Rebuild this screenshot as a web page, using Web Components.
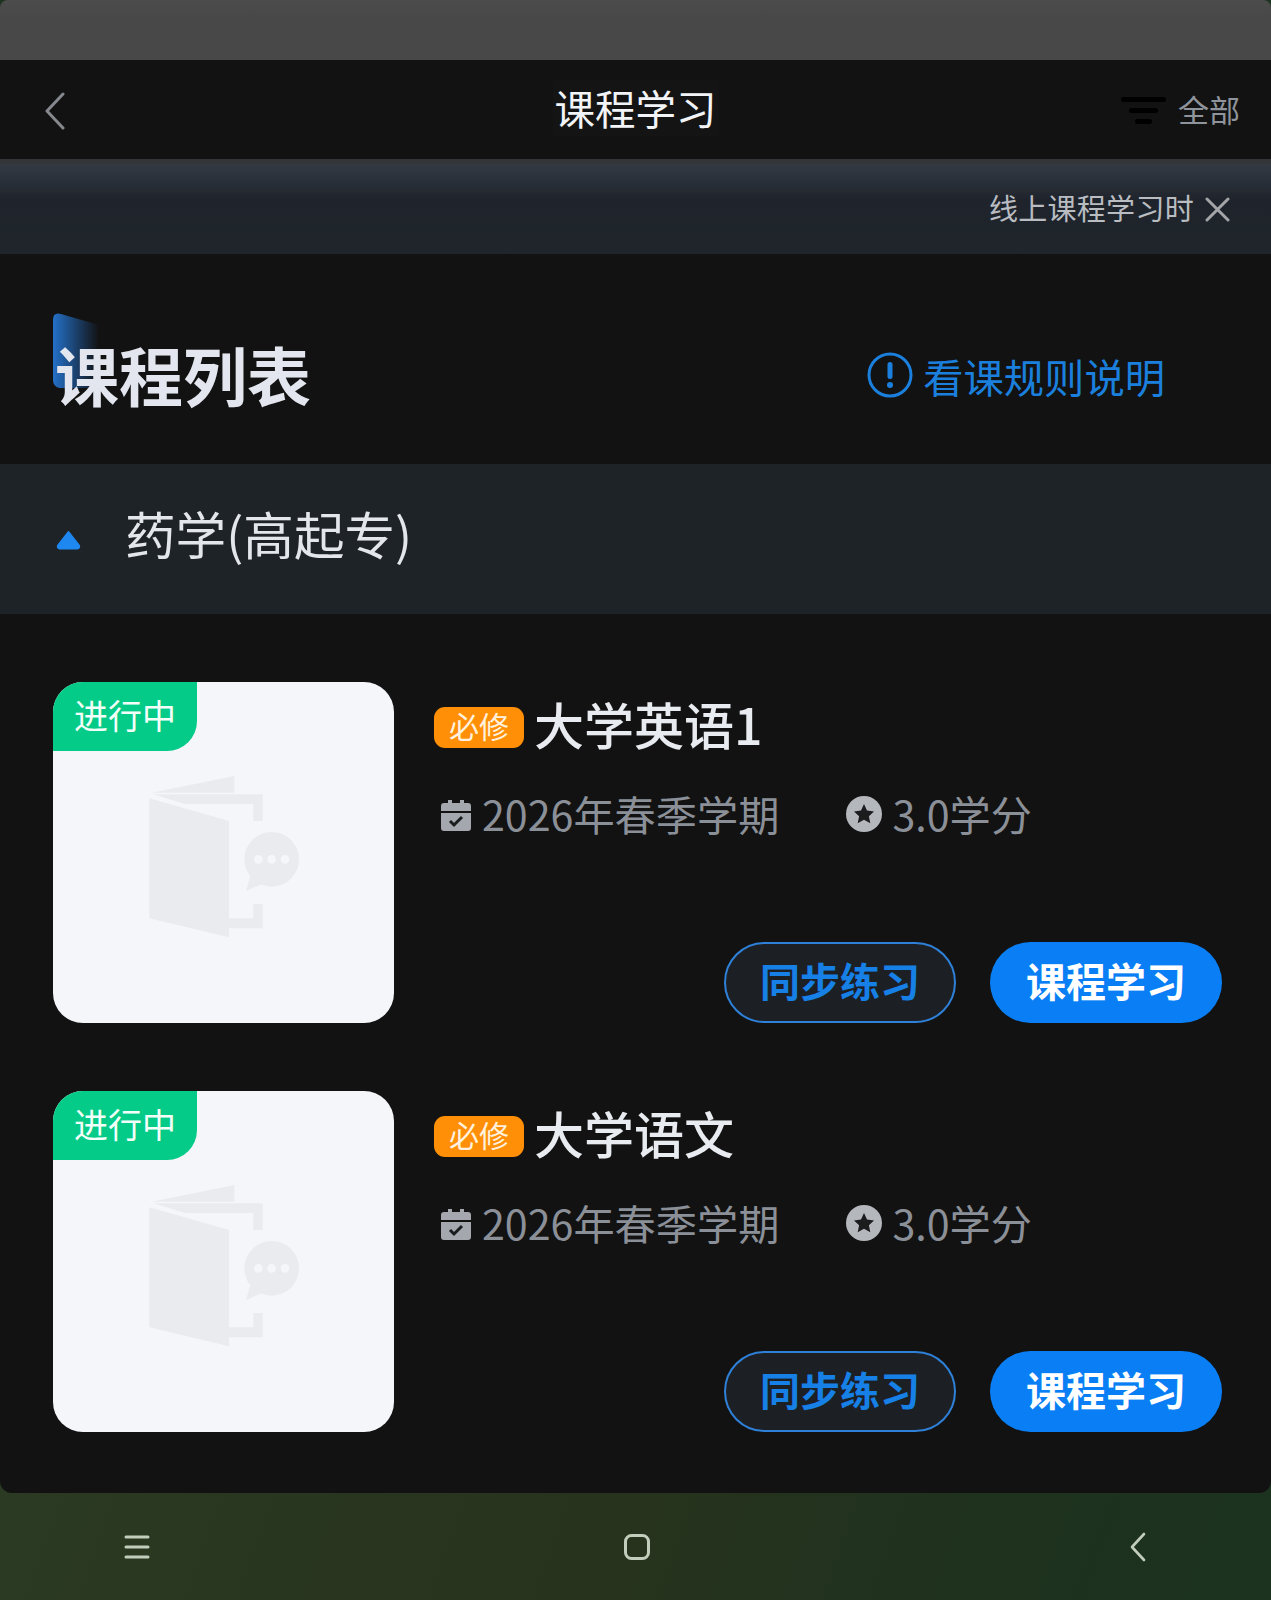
<!DOCTYPE html>
<html lang="zh-CN">
<head>
<meta charset="utf-8">
<title>课程学习</title>
<style>
    html, body { margin: 0; padding: 0; background: #1c3320; }
    body { font-family: "Noto Sans CJK SC", "Noto Sans", sans-serif; }
</style>
</head>
<body>
<app-shell>
    <app-header title-text="课程学习" filter-text="全部"></app-header>
    <notice-bar>线上课程学习时</notice-bar>
    <list-title link-text="看课规则说明">课程列表</list-title>
    <major-bar>药学(高起专)</major-bar>
    <course-card name="大学英语1" term="2026年春季学期" credit="3.0学分"></course-card>
    <course-card name="大学语文" term="2026年春季学期" credit="3.0学分"></course-card>
</app-shell>
<script>
class AppShell extends HTMLElement {
    constructor() {
        super();
        this.attachShadow({ mode: 'open' }).innerHTML = `
            <style>
                :host { display: flex; flex-direction: column; height: 1600px; overflow: hidden; background: #1c3320; }
                .status { height: 60px; flex: none; background: linear-gradient(#4c4c4c, #484848 30%); border-radius: 8px 8px 0 0; }
                .body { height: 1433px; flex: none; background: #121212; border-radius: 0 0 12px 12px; overflow: hidden; }
                .nav {
                    flex: 1;
                    margin-top: -14px;
                    padding-top: 14px;
                    display: grid;
                    grid-template-columns: repeat(3, 1fr);
                    align-items: center;
                    background: linear-gradient(110deg, #2b3a22 0%, #28331d 45%, #1f321e 75%, #1b331f 100%);
                }
                .wrap { position: relative; z-index: 1; }
                .nav svg { display: block; }
                .nav div { display: flex; }
                .nav .a { padding-left: 124px; }
                .nav .b { justify-content: center; transform: translateX(2px); }
                .nav .c { justify-content: flex-end; padding-right: 124px; }
            </style>
            <div class="wrap">
                <div class="status"></div>
                <div class="body"><slot></slot></div>
            </div>
            <div class="nav">
                <div class="a"><svg width="26" height="26" viewBox="0 0 26 26" fill="none" stroke="#c3cdbb" stroke-width="3" stroke-linecap="round"><path d="M2 3h22M2 13h22M2 23h22"/></svg></div>
                <div class="b"><svg width="28" height="28" viewBox="0 0 28 28" fill="none" stroke="#c3cdbb" stroke-width="3"><rect x="2.5" y="2.5" width="23" height="23" rx="6"/></svg></div>
                <div class="c"><svg width="18" height="30" viewBox="0 0 18 30" fill="none" stroke="#c3cdbb" stroke-width="2.6" stroke-linecap="round" stroke-linejoin="round"><path d="M15 2 3 15l12 13"/></svg></div>
            </div>
        `;
    }
}

class AppHeader extends HTMLElement {
    connectedCallback() {
        const root = this.attachShadow({ mode: 'open' });
        root.innerHTML = `
            <style>
                :host { display: grid; grid-template-columns: 1fr auto 1fr; align-items: center; height: 99px; padding: 0 31px; background: #121212; }
                svg { display: block; }
                .back { margin: 2px 0 0 13px; }
                .title { font-size: 40.5px; line-height: 56px; color: #f2f4f7; background: #141414; padding: 0 2px; margin-top: -4px; }
                .filter { display: flex; justify-content: flex-end; align-items: center; gap: 12px; font-size: 31px; color: #8f949c; }
                .filter span { margin-top: -2px; }
                .filter svg { margin-top: 2px; }
            </style>
            <svg class="back" width="21" height="38" viewBox="0 0 21 38" fill="none" stroke="#85888c" stroke-width="3" stroke-linecap="round" stroke-linejoin="round"><path d="M19 2 3 19l16 17"/></svg>
            <div class="title">${this.getAttribute('title-text')}</div>
            <div class="filter">
                <svg width="45" height="28" viewBox="0 0 45 28" fill="#000"><rect y="0" width="45" height="5" rx="2.5"/><rect x="8" y="11" width="29" height="5" rx="2.5"/><rect x="14" y="22" width="17" height="5" rx="2.5"/></svg>
                <span>${this.getAttribute('filter-text')}</span>
            </div>
        `;
    }
}

class NoticeBar extends HTMLElement {
    constructor() {
        super();
        this.attachShadow({ mode: 'open' }).innerHTML = `
            <style>
                :host {
                    display: flex; justify-content: flex-end; align-items: center; gap: 11px;
                    height: 86px; padding: 0 41px 4px 0;
                    border-top: 5px solid #333538;
                    background: linear-gradient(#333a44, #1f242c 40%, #1f252b);
                    color: #b9bcc1; font-size: 29px; letter-spacing: .3px;
                }
                svg { display: block; margin-top: 5px; }
            </style>
            <slot></slot>
            <svg width="25" height="25" viewBox="0 0 25 25" fill="none" stroke="#a3a5a7" stroke-width="3" stroke-linecap="round"><path d="M2 2l21 21M23 2 2 23"/></svg>
        `;
    }
}

class ListTitle extends HTMLElement {
    connectedCallback() {
        this.attachShadow({ mode: 'open' }).innerHTML = `
            <style>
                :host { display: flex; align-items: center; justify-content: space-between; height: 210px; padding: 0 106px 0 55px; }
                .head { position: relative; font-size: 64px; font-weight: 700; color: #e3e6ee; line-height: 80px; margin-top: 28px; }
                .head span { position: relative; }
                .mark { position: absolute; left: -2px; top: -21px; }
                .link { display: flex; align-items: center; gap: 10px; color: #1b80dd; font-size: 40.3px; margin-top: 32px; }
                svg { display: block; }
            </style>
            <div class="head">
                <svg class="mark" width="46" height="76" viewBox="0 0 46 76">
                    <defs><linearGradient id="g" x1="0" x2="1" y1="0" y2="0"><stop offset="0" stop-color="#2470c8"/><stop offset="1" stop-color="#2470c8" stop-opacity="0"/></linearGradient></defs>
                    <path d="M0 8q0-8 8-6l38 11v63H6q-6-2-6-8z" fill="url(#g)"/>
                </svg>
                <span><slot></slot></span>
            </div>
            <div class="link">
                <svg width="46" height="46" viewBox="0 0 46 46"><circle cx="23" cy="23" r="21" fill="none" stroke="#1b80dd" stroke-width="3"/><rect x="20.500" y="10" width="5" height="17" rx="2.500" fill="#1b80dd"/><circle cx="23" cy="33" r="3" fill="#1b80dd"/></svg>
                <span>${this.getAttribute('link-text')}</span>
            </div>
        `;
    }
}

class MajorBar extends HTMLElement {
    constructor() {
        super();
        this.attachShadow({ mode: 'open' }).innerHTML = `
            <style>
                :host { display: flex; align-items: center; gap: 44px; height: 150px; padding-left: 56px; background: #1e2327; color: #e3e6ea; font-size: 50.6px; }
                svg { display: block; margin-top: 2px; }
                span { margin-bottom: 12px; }
            </style>
            <svg width="25" height="20" viewBox="0 0 25 20"><path d="M12.500 2 23 15.500q1 2.500-2 3H4q-3-.5-2-3z" fill="#1e87f0" stroke="#1e87f0" stroke-width="2" stroke-linejoin="round"/></svg>
            <span><slot></slot></span>
        `;
    }
}

// Обложка-заглушка, бейдж и кнопки одного курса
class CourseCard extends HTMLElement {
    connectedCallback() {
        this.attachShadow({ mode: 'open' }).innerHTML = `
            <style>
                :host { display: flex; gap: 40px; padding: 68px 49px 0 53px; }
                .cover { position: relative; flex: none; width: 341px; height: 341px; border-radius: 30px; background: #f4f6fa; display: flex; align-items: center; justify-content: center; overflow: hidden; }
                .state { position: absolute; left: 0; top: 0; width: 144px; height: 69px; box-sizing: border-box; padding-bottom: 4px; display: flex; align-items: center; justify-content: center; background: #05cb88; color: #f3fff9; font-size: 34px; border-radius: 0 0 30px 0; }
                .info { flex: 1; display: flex; flex-direction: column; }
                .name-row { display: flex; align-items: center; gap: 10px; height: 90px; }
                .tag { width: 90px; height: 41px; box-sizing: border-box; padding-bottom: 4px; display: flex; align-items: center; justify-content: center; background: #ff8f06; color: #fff1dd; font-size: 30px; border-radius: 11px; }
                .name { font-size: 50px; font-weight: 500; color: #e8ebef; line-height: 60px; padding-bottom: 8px; }
                .meta { display: flex; align-items: center; height: 80px; box-sizing: border-box; padding: 2px 0 0 7px; color: #8b9098; font-size: 41.2px; }
                .meta svg { display: block; flex: none; }
                .cal { margin-top: 4px; }
                .star { margin-top: 2px; }
                .term { margin-left: 11px; margin-right: 67px; }
                .credit { margin-left: 10px; }
                .actions { margin-top: auto; display: flex; justify-content: flex-end; gap: 34px; }
                button { width: 232px; height: 81px; box-sizing: border-box; border-radius: 41px; font: 700 40px "Noto Sans CJK SC", "Noto Sans", sans-serif; padding: 0 0 6px; }
                .ghost { background: #1c2025; border: 2px solid #2f80d8; color: #1680e6; }
                .solid { background: #0a7ff5; border: 0; color: #fff; }
            </style>
            <div class="cover">
                <div class="state">进行中</div>
                <svg width="190" height="190" viewBox="-3 -6 570 570" fill="#e9ebef">
                    <path d="M65 98 313 48v50z"/>
                    <path d="M70 103H398V183H370V132H165z"/>
                    <path d="M58 115 297 183V532L58 475z"/>
                    <path d="M297 475H370V432H398V505H297z"/>
                    <circle cx="425" cy="298" r="82"/>
                    <path d="M362 345 348 393 400 370z"/>
                    <g fill="#f4f6fa"><circle cx="385" cy="298" r="13"/><circle cx="425" cy="298" r="13"/><circle cx="465" cy="298" r="13"/></g>
                </svg>
            </div>
            <div class="info">
                <div class="name-row"><span class="tag">必修</span><span class="name">${this.getAttribute('name')}</span></div>
                <div class="meta">
                    <svg class="cal" width="30" height="31" viewBox="0 0 30 31"><path d="M7 0h4v3h8V0h4v3h4q3 0 3 3v5H0V6q0-3 3-3h4zM0 13h30v15q0 3-3 3H3q-3 0-3-3z" fill="#a4a8ae"/><path d="M9 21l4 4 8-8" fill="none" stroke="#1b1c1e" stroke-width="3"/></svg>
                    <span class="term">${this.getAttribute('term')}</span>
                    <svg class="star" width="36" height="36" viewBox="0 0 36 36"><circle cx="18" cy="18" r="18" fill="#b4b7bc"/><path d="M18 8l3 6.500 7 .9-5.100 4.800 1.400 7L18 23.800l-6.300 3.400 1.400-7L8 15.400l7-.9z" fill="#1b1c1e"/></svg>
                    <span class="credit">${this.getAttribute('credit')}</span>
                </div>
                <div class="actions">
                    <button class="ghost">同步练习</button>
                    <button class="solid">课程学习</button>
                </div>
            </div>
        `;
    }
}

customElements.define('app-shell', AppShell);
customElements.define('app-header', AppHeader);
customElements.define('notice-bar', NoticeBar);
customElements.define('list-title', ListTitle);
customElements.define('major-bar', MajorBar);
customElements.define('course-card', CourseCard);
</script>
</body>
</html>
